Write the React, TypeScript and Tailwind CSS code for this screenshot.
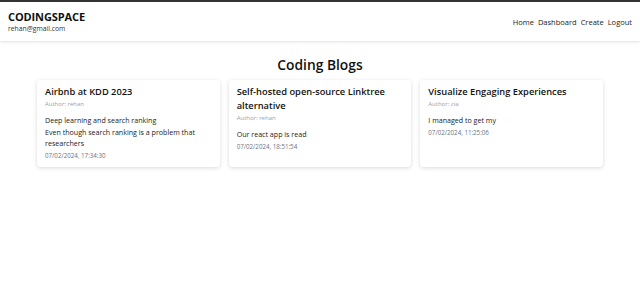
const blogs = [
    {
        title: 'Airbnb at KDD 2023',
        author: 'rehan',
        content: 'Deep learning and search ranking\nEven though search ranking is a problem that researchers',
        date: '07/02/2024, 17:34:30',
    },
    {
        title: 'Self-hosted open-source Linktree alternative',
        author: 'rehan',
        content: 'Our react app is read',
        date: '07/02/2024, 18:51:54',
    },
    {
        title: 'Visualize Engaging Experiences',
        author: 'zia',
        content: 'I managed to get my',
        date: '07/02/2024, 11:25:06',
    },
];

export default function App() {
    return (
        <div className="min-h-[286px] bg-white text-[#111] font-['Open_Sans',sans-serif]">
            {/* Navbar */}
            <nav className="flex h-[41px] items-center justify-between border-t-2 border-[#333] px-2 shadow-[0_1px_3px_rgba(0,0,0,0.12)]">
                <div className="flex flex-col pt-[1px]">
                    <span className="text-[11px] font-bold leading-[14px] tracking-[-0.01em]">CODINGSPACE</span>
                    <span className="text-[6.8px] leading-[10px] text-[#333]">rehan@gmail.com</span>
                </div>
                <div className="mt-[2px] flex gap-[4px] text-[7.5px] text-[#222]">
                    <a>Home</a>
                    <a>Dashboard</a>
                    <a>Create</a>
                    <a>Logout</a>
                </div>
            </nav>

            <h1 className="mt-[14px] text-center text-[13.8px] font-semibold leading-[20px]">Coding Blogs</h1>

            {/* Blog cards */}
            <div className="mx-auto mt-[5px] grid w-[566px] grid-cols-3 gap-[9px]">
                {blogs.map((blog) => (
                    <div key={blog.date} className="rounded-sm bg-white px-2 pt-[5px] pb-[5px] shadow-[0_1px_4px_rgba(0,0,0,0.15)]">
                        <h2 className="text-[9.3px] font-semibold leading-[14px]">{blog.title}</h2>
                        <p className="text-[6px] leading-[10px] text-gray-400">Author: {blog.author}</p>
                        <p className="mt-[6px] whitespace-pre-line text-[7.1px] leading-[11.5px] text-[#222]">{blog.content}</p>
                        <p className="text-[6.2px] leading-[12px] text-gray-500">{blog.date}</p>
                    </div>
                ))}
            </div>
        </div>
    );
}
